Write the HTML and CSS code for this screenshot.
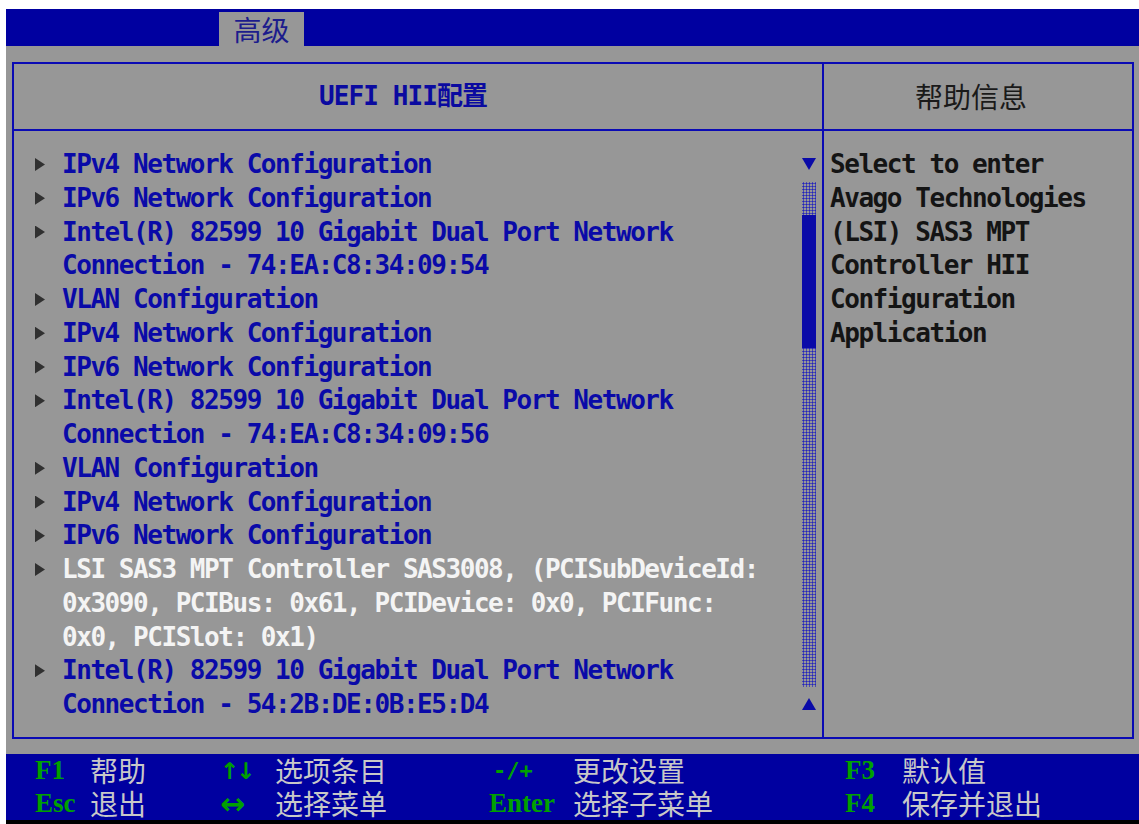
FILE: index.html
```html
<!DOCTYPE html>
<html lang="zh-CN">
<head>
<meta charset="utf-8">
<title>高级 - UEFI HII配置</title>
<link rel="stylesheet" href="styles.css">
</head>
<body>
<div class="screen">
  <header class="menubar">
    <div class="tab">高级</div>
  </header>

  <main class="desk">
    <div class="frame">
      <div class="head head-main">UEFI HII配置</div>
      <div class="head head-help">帮助信息</div>

      <div class="body-main">
        <ul class="items">
          <li class="item"><span class="mark"></span><span class="label"><span class="ln">IPv4 Network Configuration</span></span></li>
          <li class="item"><span class="mark"></span><span class="label"><span class="ln">IPv6 Network Configuration</span></span></li>
          <li class="item"><span class="mark"></span><span class="label"><span class="ln">Intel(R) 82599 10 Gigabit Dual Port Network</span><span class="ln">Connection - 74:EA:C8:34:09:54</span></span></li>
          <li class="item"><span class="mark"></span><span class="label"><span class="ln">VLAN Configuration</span></span></li>
          <li class="item"><span class="mark"></span><span class="label"><span class="ln">IPv4 Network Configuration</span></span></li>
          <li class="item"><span class="mark"></span><span class="label"><span class="ln">IPv6 Network Configuration</span></span></li>
          <li class="item"><span class="mark"></span><span class="label"><span class="ln">Intel(R) 82599 10 Gigabit Dual Port Network</span><span class="ln">Connection - 74:EA:C8:34:09:56</span></span></li>
          <li class="item"><span class="mark"></span><span class="label"><span class="ln">VLAN Configuration</span></span></li>
          <li class="item"><span class="mark"></span><span class="label"><span class="ln">IPv4 Network Configuration</span></span></li>
          <li class="item"><span class="mark"></span><span class="label"><span class="ln">IPv6 Network Configuration</span></span></li>
          <li class="item selected"><span class="mark"></span><span class="label"><span class="ln">LSI SAS3 MPT Controller SAS3008, (PCISubDeviceId:</span><span class="ln">0x3090, PCIBus: 0x61, PCIDevice: 0x0, PCIFunc:</span><span class="ln">0x0, PCISlot: 0x1)</span></span></li>
          <li class="item"><span class="mark"></span><span class="label"><span class="ln">Intel(R) 82599 10 Gigabit Dual Port Network</span><span class="ln">Connection - 54:2B:DE:0B:E5:D4</span></span></li>
        </ul>
        <div class="scroll">
          <span class="arrow down"></span>
          <div class="track"><div class="thumb"></div></div>
          <span class="arrow up"></span>
        </div>
      </div>

      <div class="body-help">
        <span class="ln">Select to enter</span>
        <span class="ln">Avago Technologies</span>
        <span class="ln">(LSI) SAS3 MPT</span>
        <span class="ln">Controller HII</span>
        <span class="ln">Configuration</span>
        <span class="ln">Application</span>
      </div>
    </div>
  </main>

  <footer class="keys">
    <span class="key">F1</span><span class="desc">帮助</span>
    <span class="key sym">↑↓</span><span class="desc">选项条目</span>
    <span class="key pm">-/+</span><span class="desc">更改设置</span>
    <span class="key">F3</span><span class="desc">默认值</span>

    <span class="key">Esc</span><span class="desc">退出</span>
    <span class="key sym wide">↔</span><span class="desc">选择菜单</span>
    <span class="key">Enter</span><span class="desc">选择子菜单</span>
    <span class="key">F4</span><span class="desc">保存并退出</span>
  </footer>
</div>
</body>
</html>
```

FILE: styles.css
```css
/* BIOS setup screen: blue menu bar, grey desk with a framed two-pane form, key legend */

body {
  margin: 0;
  background: #ffffff;
}

.screen {
  margin: 9px 0 0 6px;
  width: 1133px;
  height: 815px;
  background: #000000;
  display: flex;
  flex-direction: column;
}

/* ---- top menu bar ---- */
.menubar {
  height: 37px;
  flex: none;
  background: #0000a0;
  padding-left: 213px;
  display: flex;
  align-items: flex-end;
}

.tab {
  width: 85px;
  height: 34px;
  background: #979797;
  color: #1c1c8c;
  font: 28px/34px "Noto Sans CJK SC", sans-serif;
  text-align: center;
}

/* ---- grey desk with the form frame ---- */
.desk {
  height: 708px;
  flex: none;
  box-sizing: border-box;
  background: #979797;
  padding: 16px 5px 0 6px;
}

.frame {
  height: 677px;
  box-sizing: border-box;
  border: 2px solid #0a0ab4;
  display: grid;
  grid-template-columns: 810px 1fr;
  grid-template-rows: 67px 1fr;
  font: bold 26px/33.75px "DejaVu Sans Mono", "Noto Sans CJK SC", monospace;
  letter-spacing: -1.45px;
}

.head {
  border-bottom: 2px solid #0a0ab4;
  display: flex;
  align-items: center;
  justify-content: center;
}

.head-main {
  border-right: 2px solid #0a0ab4;
  padding-right: 30px;
  color: #0a0aa0;
  letter-spacing: -0.9px;
}

.head-help {
  color: #1a1a1a;
  font-family: "Noto Sans CJK SC", sans-serif;
  font-weight: normal;
  font-size: 28px;
  letter-spacing: 0;
  padding-right: 14px;
}

/* ---- left pane: item list + scroll bar ---- */
.body-main {
  border-right: 2px solid #0a0ab4;
  display: flex;
  padding-top: 17px;
}

.items {
  list-style: none;
  margin: 0;
  padding: 0 0 0 21px;
  flex: 1;
}

.item {
  display: flex;
}

.mark {
  flex: none;
  width: 10px;
  height: 13px;
  margin: 10px 17px 0 0;
  background: #303030;
  clip-path: polygon(0 0, 100% 50%, 0 100%);
}

.label {
  display: flex;
  flex-direction: column;
  color: #0a0aa8;
}

.selected .label {
  color: #f4f4f4;
}

.ln {
  display: block;
  white-space: pre;
}

.scroll {
  flex: none;
  width: 14px;
  margin: 10px 6px 0 0;
  display: flex;
  flex-direction: column;
}

.arrow {
  display: block;
  height: 12px;
  background: #0a0aa8;
}

.arrow.down {
  clip-path: polygon(0 0, 100% 0, 50% 100%);
}

.arrow.up {
  clip-path: polygon(50% 0, 100% 100%, 0 100%);
}

.track {
  height: 505px;
  margin: 12px 0 11px;
  background: radial-gradient(circle at 1.5px 1.5px, #2424bc 0.9px, transparent 1.2px) 0 0 / 3px 3px;
}

.thumb {
  margin-top: 33px;
  height: 133px;
  background: #0a0aa8;
}

/* ---- right pane: help text ---- */
.body-help {
  padding: 17px 0 0 6px;
  color: #141414;
}

/* ---- key legend ---- */
.keys {
  height: 66px;
  flex: none;
  background: #0000a0;
  box-sizing: border-box;
  padding-left: 29px;
  display: grid;
  grid-template-columns: 55px 130px 55px 214px 84px 272px 57px 1fr;
  grid-template-rows: 33px 33px;
  align-items: center;
}

.key {
  color: #00a000;
  font: bold 27px/33px "Liberation Serif", serif;
}

.key.sym {
  font: bold 23px/28px "DejaVu Sans", sans-serif;
  letter-spacing: -3px;
}

.key.sym.wide {
  font-size: 30px;
  letter-spacing: 0;
}

.key.pm {
  font: bold 22px/33px "DejaVu Sans Mono", monospace;
  padding-left: 4px;
}

.desc {
  color: #c8c8c8;
  font: 28px/33px "Noto Sans CJK SC", sans-serif;
}
```
